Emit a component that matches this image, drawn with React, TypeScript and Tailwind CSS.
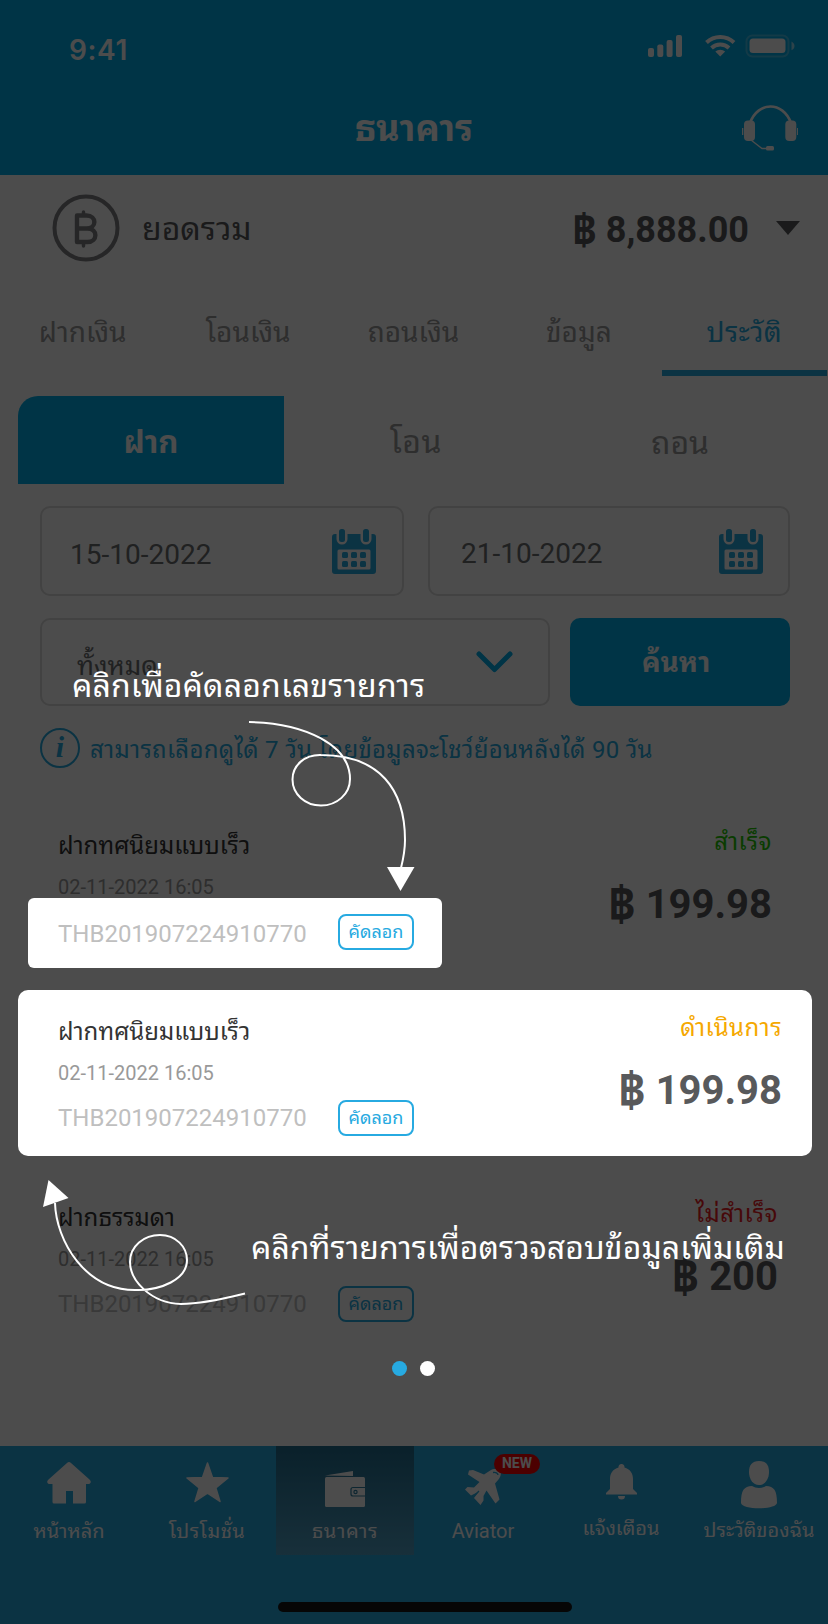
import type { ReactNode } from 'react';

function StatusBar() {
  return (
    <div className="flex h-[92px] items-start justify-between pl-[69px] pr-[33px]">
      <span className="pt-[32px] font-[Inter] text-[28px] font-semibold leading-[36px] tracking-[0.6px] text-white">9:41</span>
      <svg className="mt-[34px]" width="147" height="24" viewBox="0 0 147 24" fill="#fff">
        <rect x="0" y="14" width="6" height="9" rx="2" />
        <rect x="9.300" y="10.500" width="6" height="12.500" rx="2" />
        <rect x="18.600" y="6" width="6" height="17" rx="2" />
        <rect x="28" y="1" width="6" height="22" rx="2" />
        <g fill="none" stroke="#fff" strokeWidth="4">
          <path d="M58.500 8.500a20 20 0 0 1 27.500 0" />
          <path d="M63.500 14a13 13 0 0 1 17.500 0" />
        </g>
        <path d="M67.300 17.500a7.500 7.500 0 0 1 9.900 0L72.200 22.500z" />
        <rect x="98.500" y="1.500" width="42" height="21" rx="6" fill="none" stroke="#fff" strokeOpacity=".25" strokeWidth="2" />
        <rect x="101.500" y="4.500" width="36" height="14.500" rx="3.500" />
        <path d="M143.500 7.500c4 2.300 4 6.500 0 8.800z" opacity=".6" />
      </svg>
    </div>
  );
}

function Headset() {
  return (
    <svg width="56" height="46" viewBox="0 0 56 46" fill="#fff">
      <path d="M8 18C16-4 41-4 49 18" fill="none" stroke="#fff" strokeWidth="2.600" />
      <rect x="2" y="15.500" width="11" height="20.500" rx="4" />
      <rect x="43.300" y="15.500" width="11" height="20.500" rx="4" />
      <rect x="0" y="23" width="1.300" height="7" />
      <rect x="55" y="23" width="1" height="7" />
      <path d="M9 35l11 8.500h5" fill="none" stroke="#fff" strokeWidth="1.300" />
      <rect x="24" y="41" width="8" height="4.600" rx="1.500" />
    </svg>
  );
}

function BahtCoin() {
  return (
    <svg width="68" height="68" viewBox="0 0 68 68" fill="none" stroke="#808184">
      <circle cx="34" cy="34" r="31.500" strokeWidth="4" />
      <path d="M25 21.500h9.500c10.500 0 10.500 13 0 13H25h10.500c10.500 0 10.500 13.500 0 13.500H25z" strokeWidth="4.400" strokeLinejoin="round" />
      <path d="M31.500 18v3M31.500 49v3" strokeWidth="3.500" strokeLinecap="round" />
    </svg>
  );
}

function Calendar() {
  return (
    <svg width="44" height="45" viewBox="0 0 44 45" fill="#27aae1">
      <path d="M3 5h1.500v5a5.500 5.500 0 0 0 11 0V5h13v5a5.500 5.500 0 0 0 11 0V5H41a3 3 0 0 1 3 3v34a3 3 0 0 1-3 3H3a3 3 0 0 1-3-3V8a3 3 0 0 1 3-3zM7 20.500a1.500 1.500 0 0 0-1.500 1.500v17A1.500 1.500 0 0 0 7 40.500h30a1.500 1.500 0 0 0 1.500-1.500V22a1.500 1.500 0 0 0-1.500-1.500z" fillRule="evenodd" />
      <rect x="7" y="0" width="6" height="13" rx="2.500" />
      <rect x="31" y="0" width="6" height="13" rx="2.500" />
      {[10, 19, 28].map((x) => (
        <g key={x}>
          <rect x={x} y="23" width="6" height="6" rx="1.500" />
          <rect x={x} y="32" width="6" height="6" rx="1.500" />
        </g>
      ))}
    </svg>
  );
}

function Baht() {
  return <span className="align-[-0.06em] text-[1.2em] leading-[0]">฿</span>;
}

function CopyButton() {
  return (
    <button className="h-[36px] w-[76px] rounded-[8px] border-2 border-[#27aae1] text-center text-[18px] leading-[32px] text-[#27aae1]">
      คัดลอก
    </button>
  );
}

type RowProps = {
  title: string;
  status: string;
  statusClass: string;
  amount: string;
  rightClass: string;
  cardClass?: string;
  refClass: string;
  codeClass?: string;
};

function HistoryRow({ title, status, statusClass, amount, rightClass, cardClass = '', refClass, codeClass = '' }: RowProps) {
  return (
    <div className={`mx-[18px] flex h-[166px] w-[794px] justify-between pl-[40px] ${cardClass}`}>
      <div className="pt-[27px]">
        <div className="text-[24px] leading-[30px] text-[#333]">{title}</div>
        <div className="mt-[14px] text-[20px] leading-[24px] text-[#999]">02-11-2022 16:05</div>
        <div className={`flex ${refClass}`}>
          <span className={`w-[280px] text-[24px] leading-[36px] text-[#bfbfbf] ${codeClass}`}>THB201907224910770</span>
          <CopyButton />
        </div>
      </div>
      <div className={`pt-[23px] text-right ${rightClass}`}>
        <div className={`text-[24px] leading-[30px] tracking-[0.5px] ${statusClass}`}>{status}</div>
        <div className="mt-[25px] h-[46px] text-[40px] font-bold leading-[46px] text-[#58595b]">
          <Baht /> {amount}
        </div>
      </div>
    </div>
  );
}

function NavItem({ label, children, labelClass = '', className = '' }: { label: string; children: ReactNode; labelClass?: string; className?: string }) {
  return (
    <div className={`flex h-[109px] w-[138px] flex-col items-center ${className}`}>
      <div className="relative flex h-[73px] w-full justify-center">{children}</div>
      <span className={`whitespace-nowrap text-[20px] leading-[24px] text-white ${labelClass}`}>{label}</span>
    </div>
  );
}

const TABS = ['ฝากเงิน', 'โอนเงิน', 'ถอนเงิน', 'ข้อมูล'];

export default function App() {
  return (
    <div className="relative flex h-[1624px] w-[828px] flex-col overflow-hidden bg-white font-[Roboto,'Noto_Sans_Thai_Looped',sans-serif]">
      <header className="h-[175px] bg-[#00aeea]">
        <StatusBar />
        <div className="grid grid-cols-[1fr_auto_1fr] items-start">
          <span />
          <h1 className="pt-[16px] text-[36px] font-bold leading-[42px] text-white">ธนาคาร</h1>
          <div className="flex justify-end pr-[30px] pt-[13px]">
            <Headset />
          </div>
        </div>
      </header>

      <section className="flex h-[122px] items-start pl-[52px] pr-[28px]">
        <div className="pt-[19px]">
          <BahtCoin />
        </div>
        <span className="ml-[22px] pt-[34px] text-[32px] leading-[40px] text-[#58595b]">ยอดรวม</span>
        <span className="ml-auto pt-[35px] text-[36px] font-bold leading-[40px] text-[#58595b]"><Baht /> 8,888.00</span>
        <svg className="ml-[27px] mt-[46px]" width="24" height="14" viewBox="0 0 24 14" fill="#58595b">
          <path d="M0 0h24L12 14z" />
        </svg>
      </section>

      <nav className="grid h-[79px] grid-cols-5 pr-px text-center text-[28px] leading-[40px] text-[#999]">
        {TABS.map((t) => (
          <span key={t} className="pt-[16px]">{t}</span>
        ))}
        <span className="border-b-[6px] border-[#27aae1] pt-[16px] tracking-[0.3px] text-[#27aae1]">ประวัติ</span>
      </nav>

      <div className="ml-[18px] mt-[20px] grid h-[88px] w-[794px] grid-cols-[266px_264px_264px] text-center text-[32px] leading-[82px] text-[#999]">
        <span className="rounded-tl-[20px] bg-[#00b0ea] pt-[6px] text-[31px] font-bold text-white">ฝาก</span>
        <span className="pt-[5px] tracking-[0.5px]">โอน</span>
        <span className="pt-[6px]">ถอน</span>
      </div>

      <div className="mx-[40px] mt-[22px] flex w-[750px] justify-between">
        <div className="flex h-[90px] w-[364px] justify-between rounded-[10px] border-2 border-[#dcdcdc] pl-[28px] pr-[26px] text-[28px] leading-[93px] text-[#6d6e71]">
          15-10-2022
          <span className="pt-[21px]"><Calendar /></span>
        </div>
        <div className="flex h-[90px] w-[362px] justify-between rounded-[10px] border-2 border-[#dcdcdc] pl-[31px] pr-[25px] text-[28px] leading-[91px] text-[#6d6e71]">
          21-10-2022
          <span className="pt-[21px]"><Calendar /></span>
        </div>
      </div>

      <div className="mx-[40px] mt-[22px] flex w-[750px] justify-between">
        <div className="flex h-[88px] w-[510px] justify-between rounded-[10px] border-2 border-[#dcdcdc] pl-[35px] pr-[35px] text-[26px] leading-[93px] text-[#6d6e71]">
          ทั้งหมด
          <svg className="mt-[31px]" width="37" height="22" viewBox="0 0 37 22" fill="none" stroke="#00aeea" strokeWidth="5" strokeLinecap="round" strokeLinejoin="round">
            <path d="M3 3l15.500 15.500L34 3" />
          </svg>
        </div>
        <button className="h-[88px] w-[220px] rounded-[10px] bg-[#00b0ea] pr-[8px] text-[28px] font-bold leading-[87px] text-white">ค้นหา</button>
      </div>

      <div className="ml-[40px] mt-[22px] flex h-[40px] items-center text-[24px] leading-[40px] text-[#27aae1]">
        <span className="h-[40px] w-[40px] rounded-full border-2 border-[#27aae1] text-center font-['Liberation_Serif',serif] text-[30px] font-bold italic leading-[34px]">i</span>
        <span className="ml-[10px] whitespace-nowrap pt-[3px] tracking-[0.3px]">สามารถเลือกดูได้ 7 วัน โดยข้อมูลจะโชว์ย้อนหลังได้ 90 วัน</span>
      </div>

      <div className="mt-[36px] flex flex-col gap-[20px]">
        <HistoryRow
          title="ฝากทศนิยมแบบเร็ว"
          status="สำเร็จ"
          statusClass="text-[#22c800]"
          amount="199.98"
          rightClass="pr-[40px]"
          refClass="relative z-20 -ml-[30px] -mt-px h-[70px] w-[414px] rounded-[6px] bg-white pl-[30px] pt-[16px]"
          codeClass="pt-[2px]"
        />
        <HistoryRow
          title="ฝากทศนิยมแบบเร็ว"
          status="ดำเนินการ"
          statusClass="text-[#f5a800]"
          amount="199.98"
          rightClass="pr-[30px]"
          cardClass="relative z-20 rounded-[10px] bg-white"
          refClass="mt-[15px]"
        />
        <HistoryRow
          title="ฝากธรรมดา"
          status="ไม่สำเร็จ"
          statusClass="text-[#ed1c24]"
          amount="200"
          rightClass="pr-[34px]"
          refClass="mt-[15px]"
        />
      </div>

      <footer className="mt-auto flex h-[178px] flex-col items-center bg-[#27aae1]">
        <div className="flex">
          <NavItem label="หน้าหลัก">
            <svg className="mt-[16px]" width="44" height="42" viewBox="0 0 44 42" fill="#fff">
              <path d="M20 1a3 3 0 0 1 4 0l18.500 16.500c2.500 2.500 1 4.500-1.500 4.500h-2v18a1.500 1.500 0 0 1-1.500 1.500H26V29h-7v12.500H7A1.500 1.500 0 0 1 5.500 40V22H3C.500 22-1 20 1.500 17.500z" />
            </svg>
          </NavItem>
          <NavItem label="โปรโมชั่น" labelClass="tracking-[0.5px]">
            <svg className="mt-[16px]" width="43" height="41" viewBox="0 0 43 41" fill="#fff" stroke="#fff" strokeWidth="1.500" strokeLinejoin="round">
              <path d="M21.500 1l5 14.500 15.500.500-12.200 9.800L34 39.500l-12.500-8.300L9 39.500l4.200-13.700L1 16l15.500-.500z" />
            </svg>
          </NavItem>
          <NavItem label="ธนาคาร" labelClass="tracking-[0.6px]" className="bg-linear-to-b from-[#216e8f] to-[#50a0c5]">
            <svg className="mt-[25px]" width="40" height="36" viewBox="0 0 40 36" fill="#fff">
              <path d="M0 4.500L28 0v5z" />
              <rect y="6" width="40" height="30" rx="1.500" />
              <path d="M40 16.500H28a2 2 0 0 0-2 2V23a2 2 0 0 0 2 2h12" fill="none" stroke="#2f7fa3" strokeWidth="1.200" />
              <circle cx="30.500" cy="21" r="1.600" fill="none" stroke="#2f7fa3" strokeWidth="1.200" />
            </svg>
          </NavItem>
          <NavItem label="Aviator">
            <svg className="mt-[23px]" width="36" height="36" viewBox="0 0 36 36" fill="#fff">
              <path d="M4 1.500L8 1l11 4.500 7-4.500c4-2 8-1 9.500 0 1 4 0 7-2 9.500l-3.500 4 4.500 16-4 4L21.500 21.500l-3 5.500v4.500L15.500 36 9 29l5-6.500L6 26.500 0 20.500 2.500 18l6.500.500L14.500 13 3 5.500z" />
              <path d="M28 3.500c2.500-.500 5 .500 5 2.500M8 28l6-6" fill="none" stroke="#27aae1" strokeWidth="1.300" />
            </svg>
            <span className="absolute left-[80px] top-[8px] h-[20px] w-[46px] rounded-full bg-[#ff0000] text-center text-[14px] font-bold leading-[19px] text-white">NEW</span>
          </NavItem>
          <NavItem label="แจ้งเตือน" labelClass="-mt-[3px]">
            <svg className="mt-[17px]" width="31" height="38" viewBox="0 0 31 38" fill="#fff">
              <path d="M15.500 1a3 3 0 0 1 3 3.500C24 6 27 10.500 27 16v10l4 4v1.500H0V30l4-4V16c0-5.500 3-10 8.500-11.500a3 3 0 0 1 3-3.500zM12 33h7a3.500 3.500 0 0 1-7 0z" />
            </svg>
          </NavItem>
          <NavItem label="ประวัติของฉัน" labelClass="-mt-px">
            <svg className="mt-[15px]" width="36" height="48" viewBox="0 0 36 48" fill="#fff">
              <path d="M18 0C25 0 28 4 28 11s-4 13-10 13S8 18 8 11 11 0 18 0z" />
              <path d="M11 25c4 2.500 10 2.500 14 0 8 .500 11 4 11 17-1 7-35 7-36 0C0 29 3 25.500 11 25z" />
            </svg>
          </NavItem>
        </div>
        <div className="ml-[22px] mt-[47px] h-[10px] w-[294px] rounded-full bg-[#151515]" />
      </footer>

      <div className="absolute inset-0 z-10 bg-black/70" />

      <p className="absolute left-[72px] top-[665px] z-30 whitespace-nowrap text-[32px] leading-[42px] tracking-[0.15px] text-white">คลิกเพื่อคัดลอกเลขรายการ</p>
      <p className="absolute left-[251px] top-[1227px] z-30 whitespace-nowrap text-[32px] leading-[42px] tracking-[0.06px] text-white">คลิกที่รายการเพื่อตรวจสอบข้อมูลเพิ่มเติม</p>

      <svg className="absolute left-[240px] top-[710px] z-30" width="190" height="190" viewBox="240 710 190 190" fill="none" stroke="#fff" strokeWidth="2">
        <path d="M249 722C305 723 350 745 350 779C350 794 337 805.500 321 805.500C305 805.500 292.500 794 292.500 779.500C292.500 765 305 754.500 321 755C380 755 405 790 405 840C405 850 403 860 401 868" />
        <path d="M387 867h27.500L400.500 891z" fill="#fff" stroke="none" />
      </svg>
      <svg className="absolute left-[40px] top-[1170px] z-30" width="210" height="140" viewBox="40 1170 210 140" fill="none" stroke="#fff" strokeWidth="2">
        <path d="M245 1293.500C215 1301 195 1304 181 1304C150 1303 130 1280 130 1262C130 1246 144 1235 160 1235C176 1235 187 1247 187 1260C187 1280 160 1290 138 1290C85 1292 56 1240 55 1203" />
        <path d="M48.500 1180L43 1207L68.500 1198z" fill="#fff" stroke="none" />
      </svg>

      <div className="absolute left-[392px] top-[1361px] z-30 flex gap-[13px]">
        <span className="h-[15px] w-[15px] rounded-full bg-[#27aae1]" />
        <span className="h-[15px] w-[15px] rounded-full bg-white" />
      </div>
    </div>
  );
}
